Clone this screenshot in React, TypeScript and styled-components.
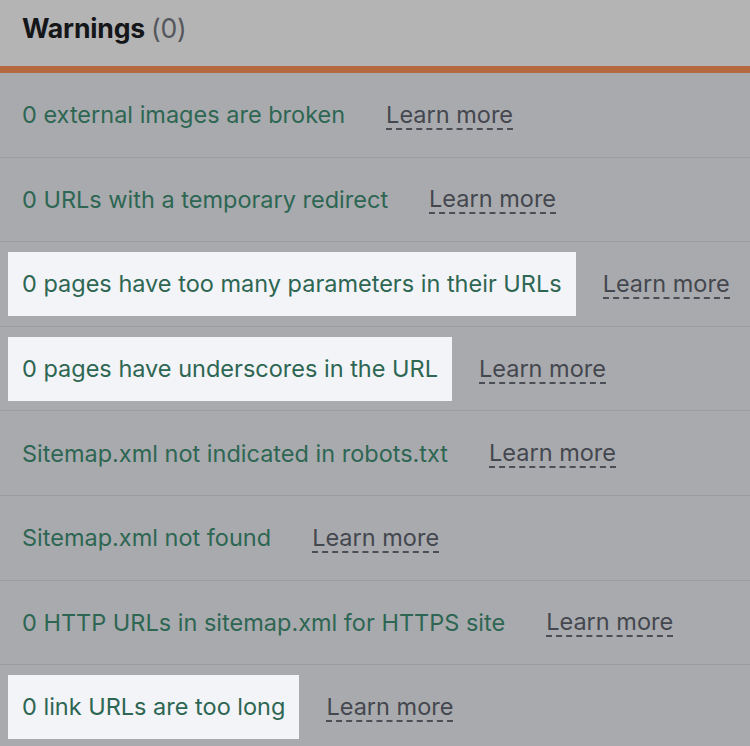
import React from "react";
import styled, { createGlobalStyle } from "styled-components";

const Global = createGlobalStyle`
  html, body { margin: 0; padding: 0; background: #a9aaae; }
  body { font-family: Inter, "Noto Sans", sans-serif; }
`;

const Panel = styled.div`
  width: 750px;
  height: 746px;
  overflow: hidden;
  background: #a9aaae;
`;

const Header = styled.div`
  height: 66px;
  background: #b4b4b4;
  display: flex;
  align-items: center;
  padding-left: 22px;
  border-bottom: 7px solid #b5683d;
  box-sizing: content-box;
`;

const Title = styled.h2`
  margin: 0;
  font-size: 26.6px;
  font-weight: 700;
  color: #15161a;
  letter-spacing: -0.2px;
  padding-bottom: 10px;
`;

const Count = styled.span`
  font-weight: 400;
  color: #55575d;
  margin-left: 6px;
`;

const Row = styled.div`
  height: 84.6px;
  display: flex;
  align-items: center;
  padding-left: 8px;
  border-bottom: 1.5px solid #9b9da1;
  box-sizing: border-box;
`;

const Issue = styled.span<{ $hl?: boolean }>`
  display: flex;
  align-items: center;
  height: 64px;
  padding: 0 14px;
  font-size: 23.5px;
  color: #2d6652;
  background: ${(p) => (p.$hl ? "#f3f4f8" : "transparent")};
  white-space: nowrap;
`;

const Learn = styled.a`
  margin-left: 27px;
  margin-top: 2px;
  font-size: 23.5px;
  color: #44474e;
  text-decoration: none;
  border-bottom: 2px dashed #4b4e55;
  line-height: 1.1;
  white-space: nowrap;
`;

const items: { text: string; hl?: boolean }[] = [
  { text: "0 external images are broken" },
  { text: "0 URLs with a temporary redirect" },
  { text: "0 pages have too many parameters in their URLs", hl: true },
  { text: "0 pages have underscores in the URL", hl: true },
  { text: "Sitemap.xml not indicated in robots.txt" },
  { text: "Sitemap.xml not found" },
  { text: "0 HTTP URLs in sitemap.xml for HTTPS site" },
  { text: "0 link URLs are too long", hl: true },
];

export default function App() {
  return (
    <Panel>
      <Global />
      <Header>
        <Title>
          Warnings<Count>(0)</Count>
        </Title>
      </Header>
      {items.map((it) => (
        <Row key={it.text}>
          <Issue $hl={it.hl}>{it.text}</Issue>
          <Learn>Learn more</Learn>
        </Row>
      ))}
    </Panel>
  );
}
